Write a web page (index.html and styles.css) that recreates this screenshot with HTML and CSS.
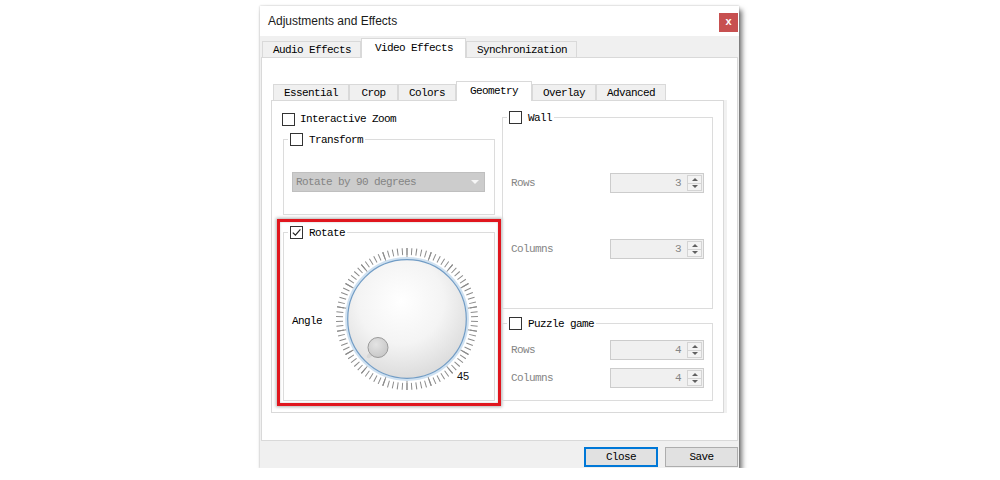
FILE: index.html
```html
<!DOCTYPE html>
<html>
<head>
<meta charset="utf-8">
<title>Adjustments and Effects</title>
<link rel="stylesheet" href="styles.css">
</head>
<body>
<div class="window">
  <div class="titlebar">
    <span class="title">Adjustments and Effects</span>
    <span class="close">x</span>
  </div>
  <div class="wbody">
    <div class="tabs outer-tabs">
      <div class="tab">Audio Effects</div>
      <div class="tab active">Video Effects</div>
      <div class="tab">Synchronization</div>
    </div>
    <div class="outer-pane">
      <div class="tabs inner-tabs">
        <div class="tab">Essential</div>
        <div class="tab tab-min">Crop</div>
        <div class="tab">Colors</div>
        <div class="tab active">Geometry</div>
        <div class="tab">Overlay</div>
        <div class="tab">Advanced</div>
      </div>
      <div class="inner-pane">
        <div class="col">
          <div class="check-row"><span class="cb"></span><span>Interactive Zoom</span></div>
          <fieldset class="group transform-group">
            <legend><span class="cb"></span><span>Transform</span></legend>
            <div class="combo"><span>Rotate by 90 degrees</span><span class="arrow"></span></div>
          </fieldset>
          <div class="highlight">
            <fieldset class="group rotate-group">
              <legend><span class="cb"><svg class="tick" width="11" height="11" viewBox="0 0 11 11"><path d="M1.8 5.6 L4.4 8.2 L9.4 2.4" fill="none" stroke="#222" stroke-width="1.2"/></svg></span><span>Rotate</span></legend>
              <div class="dial-row">
                <span class="angle">Angle</span>
                <svg class="dial" width="150" height="150" viewBox="0 0 150 150">
                  <defs>
                    <radialGradient id="knobGrad" cx="45%" cy="35%" r="72%">
                      <stop offset="0" stop-color="#ffffff"/>
                      <stop offset="0.5" stop-color="#f4f4f4"/>
                      <stop offset="1" stop-color="#d6d6d6"/>
                    </radialGradient>
                    <radialGradient id="indGrad" cx="40%" cy="35%" r="75%">
                      <stop offset="0" stop-color="#e4e4e4"/>
                      <stop offset="1" stop-color="#c4c4c4"/>
                    </radialGradient>
                  </defs>
                  <circle cx="75" cy="75" r="67.5" fill="none" stroke="#8c8c8c" stroke-width="7" pathLength="360" stroke-dasharray="0.85 3.15" stroke-dashoffset="-1.575"/>
                  <circle cx="75" cy="75" r="65.5" fill="none" stroke="#8c8c8c" stroke-width="11" pathLength="360" stroke-dasharray="0.9 19.1" stroke-dashoffset="-9.55"/>
                  <circle cx="75" cy="75" r="60.6" fill="none" stroke="#cfe1f1" stroke-width="2.6"/>
                  <circle cx="75" cy="75" r="59.3" fill="url(#knobGrad)" stroke="#719cc5" stroke-width="1.2"/>
                  <ellipse cx="38" cy="111" rx="4" ry="2" fill="#d8d8d8" transform="rotate(-45 38 111)"/>
                  <circle cx="46" cy="103.5" r="10" fill="url(#indGrad)" stroke="#9a9a9a" stroke-width="1"/>
                  <text class="dial-value" x="125" y="136">45</text>
                </svg>
              </div>
            </fieldset>
          </div>
        </div>
        <div class="col">
          <fieldset class="group wall-group">
            <legend><span class="cb"></span><span>Wall</span></legend>
            <div class="spin-row">
              <span class="dim">Rows</span>
              <div class="spin"><span class="val">3</span><span class="btns"><span class="sb up"></span><span class="sb down"></span></span></div>
            </div>
            <div class="spin-row">
              <span class="dim">Columns</span>
              <div class="spin"><span class="val">3</span><span class="btns"><span class="sb up"></span><span class="sb down"></span></span></div>
            </div>
          </fieldset>
          <fieldset class="group puzzle-group">
            <legend><span class="cb"></span><span>Puzzle game</span></legend>
            <div class="spin-row">
              <span class="dim">Rows</span>
              <div class="spin"><span class="val">4</span><span class="btns"><span class="sb up"></span><span class="sb down"></span></span></div>
            </div>
            <div class="spin-row">
              <span class="dim">Columns</span>
              <div class="spin"><span class="val">4</span><span class="btns"><span class="sb up"></span><span class="sb down"></span></span></div>
            </div>
          </fieldset>
        </div>
      </div>
    </div>
    <div class="footer">
      <button class="btn btn-default">Close</button>
      <button class="btn">Save</button>
    </div>
  </div>
</div>
</body>
</html>
```

FILE: styles.css
```css
* { box-sizing: border-box; }
html, body { margin: 0; background: #ffffff; }
body {
  padding: 6px 0 0 260px;
  font-family: "Liberation Mono", "DejaVu Sans Mono", monospace;
  font-size: 11px;
  line-height: 13px;
  letter-spacing: -0.6px;
  color: #000;
}
.window {
  width: 479px;
  height: 462px;
  display: flex;
  flex-direction: column;
  background: #f0f0f0;
  box-shadow: 3px 4px 5px rgba(0,0,0,0.55), 0 0 2px rgba(0,0,0,0.25);
}
.titlebar {
  height: 30px;
  flex: none;
  background: #fff;
  display: flex;
  align-items: flex-start;
  justify-content: space-between;
  padding-left: 8px;
}
.title {
  font-family: "Liberation Sans", Arial, sans-serif;
  font-size: 12px;
  line-height: 30px;
  letter-spacing: 0;
  color: #1a1a1a;
}
.close {
  width: 19px;
  height: 19px;
  margin: 7px 1px 0 0;
  background: #c75050;
  color: #fff;
  font-family: "Liberation Sans", Arial, sans-serif;
  font-weight: bold;
  font-size: 11px;
  line-height: 17px;
  letter-spacing: 0;
  text-align: center;
}
.wbody {
  flex: 1;
  display: flex;
  flex-direction: column;
  padding: 2px 1px 0 1px;
}
.tabs {
  display: flex;
  align-items: flex-end;
  height: 19px;
  flex: none;
}
.tab {
  height: 16px;
  border: 1px solid #d9d9d9;
  border-bottom: 0;
  background: #f0f0f0;
  padding: 0 10px;
  line-height: 16px;
  white-space: nowrap;
  text-align: center;
}
.tab.active {
  height: 20px;
  margin-bottom: -1px;
  padding: 0 13px;
  background: #fff;
  line-height: 18px;
  position: relative;
  z-index: 1;
}
.outer-tabs { padding-left: 1px; }
.outer-tabs .tab { padding: 0 9px 0 10px; }
.outer-tabs .tab.active { padding: 0 12px 0 13px; }
.tab-min { min-width: 49px; }

.outer-pane {
  height: 384px;
  flex: none;
  background: #fff;
  border: 1px solid #d9d9d9;
  padding: 23px 13px 0 9px;
}
.inner-tabs { margin-left: 2px; }
.inner-pane {
  width: 453px;
  height: 313px;
  border: 1px solid #d9d9d9;
  box-shadow: 3px 0 0 #f1f1f1;
  padding: 0 10px;
  display: grid;
  grid-template-columns: 213px 211px;
  column-gap: 7px;
  align-items: start;
}
.col { display: flex; flex-direction: column; }

.cb {
  width: 13px;
  height: 13px;
  flex: none;
  border: 1px solid #333;
  background: #fff;
  display: block;
}
.cb .tick { display: block; }
.check-row {
  display: flex;
  align-items: center;
  gap: 5px;
  height: 14px;
  line-height: 14px;
  margin-top: 11px;
}

.group {
  margin: 0;
  border: 1px solid #dcdcdc;
  min-width: 0;
}
.group legend {
  display: flex;
  align-items: center;
  gap: 6px;
  height: 13px;
  padding: 0 2px;
  margin-left: -4px;
  line-height: 14px;
}
.transform-group {
  margin: 7px 0 0 1px;
  padding: 26px 9px 22px 8px;
}
.combo {
  height: 20px;
  background: #cccccc;
  border: 1px solid #bfbfbf;
  color: #848484;
  display: flex;
  align-items: center;
  justify-content: space-between;
  padding: 0 5px 0 3px;
}
.arrow {
  width: 0;
  height: 0;
  border-left: 4px solid transparent;
  border-right: 4px solid transparent;
  border-top: 4px solid #f6f6f6;
}
.highlight {
  margin: 4px -6px 0 -5px;
  border: 3px solid #e0161e;
  padding: 4px 3px 2px 3px;
  box-shadow: 0 0 3px 1px rgba(0,0,0,0.3), inset 0 0 2px rgba(0,0,0,0.25);
}
.rotate-group {
  padding: 5px 0 6px 8px;
}
.dial-row {
  display: flex;
  align-items: center;
}
.angle { padding-top: 5px; }
.dial { display: block; margin-left: 10px; flex: none; }
.dial-value {
  font-family: "Liberation Sans", Arial, sans-serif;
  font-size: 11px;
  letter-spacing: 0;
  fill: #111;
}

.wall-group {
  margin-top: 10px;
  padding: 49px 8px 49px 8px;
  display: flex;
  flex-direction: column;
  gap: 46px;
}
.puzzle-group {
  margin-top: 8px;
  padding: 10px 8px 12px 8px;
  display: flex;
  flex-direction: column;
  gap: 8px;
}
.spin-row {
  display: flex;
  align-items: center;
  justify-content: space-between;
  height: 20px;
}
.dim { color: #858585; padding-top: 1px; }
.spin {
  width: 94px;
  height: 20px;
  border: 1px solid #cccccc;
  background: #f0f0f0;
  display: flex;
}
.val {
  flex: 1;
  text-align: right;
  padding-right: 6px;
  line-height: 19px;
  color: #858585;
}
.btns {
  width: 15px;
  margin: 1px 1px 1px 0;
  display: flex;
  flex-direction: column;
}
.sb {
  flex: 1;
  border: 1px solid #d4d4d4;
  background: #f3f3f3;
  display: flex;
  align-items: center;
  justify-content: center;
}
.sb.down { border-top: 0; }
.sb::after {
  content: "";
  width: 0;
  height: 0;
  border-left: 3px solid transparent;
  border-right: 3px solid transparent;
}
.sb.up::after { border-bottom: 3px solid #606060; }
.sb.down::after { border-top: 3px solid #606060; }

.footer {
  flex: 1;
  display: flex;
  justify-content: flex-end;
  align-items: flex-start;
  gap: 7px;
  padding-top: 6px;
}
.btn {
  width: 73px;
  height: 20px;
  margin: 0;
  padding: 0;
  background: #e1e1e1;
  border: 1px solid #adadad;
  font-family: "Liberation Mono", "DejaVu Sans Mono", monospace;
  font-size: 11px;
  letter-spacing: -0.6px;
  color: #000;
}
.btn-default {
  width: 74px;
  border: 2px solid #0078d7;
}
```
